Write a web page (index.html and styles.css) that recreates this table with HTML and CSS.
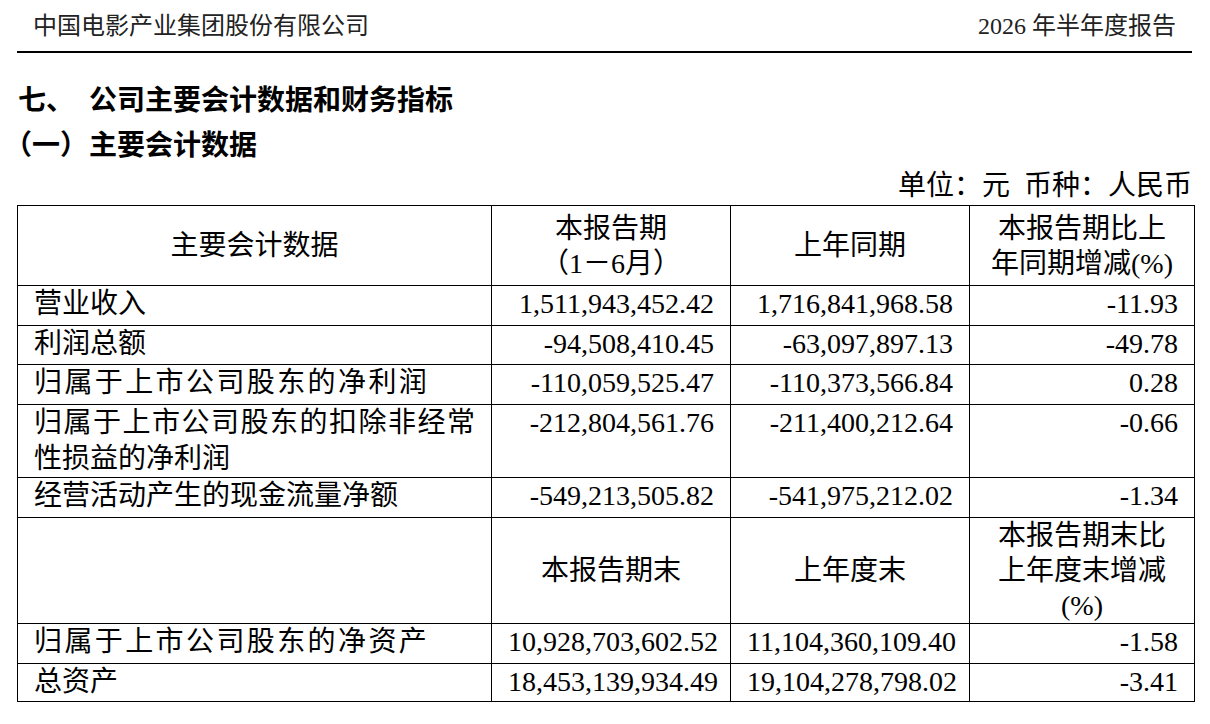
FILE: index.html
```html
<!DOCTYPE html>
<html lang="zh-CN">
<head>
<meta charset="utf-8">
<title>2026 年半年度报告</title>
<link rel="stylesheet" href="styles.css">
</head>
<body>
<div class="page">
  <header class="top">
    <span class="company">中国电影产业集团股份有限公司</span>
    <span class="report">2026 年半年度报告</span>
  </header>

  <h1 class="heading"><span class="label">七、</span><span>公司主要会计数据和财务指标</span></h1>
  <h2 class="heading"><span class="label paren">（一）</span><span>主要会计数据</span></h2>

  <div class="unit">单位：元&nbsp;&nbsp;币种：人民币</div>

  <table class="data">
    <colgroup>
      <col class="c1"><col class="c2"><col class="c3"><col class="c4">
    </colgroup>
    <tbody>
      <tr class="h-head">
        <th>主要会计数据</th>
        <th>本报告期<br>（1－6月）</th>
        <th>上年同期</th>
        <th>本报告期比上<br>年同期增减(%)</th>
      </tr>
      <tr class="h-40">
        <td class="name">营业收入</td>
        <td class="num">1,511,943,452.42</td>
        <td class="num">1,716,841,968.58</td>
        <td class="num">-11.93</td>
      </tr>
      <tr class="h-39">
        <td class="name">利润总额</td>
        <td class="num">-94,508,410.45</td>
        <td class="num">-63,097,897.13</td>
        <td class="num">-49.78</td>
      </tr>
      <tr class="h-40">
        <td class="name wide">归属于上市公司股东的净利润</td>
        <td class="num">-110,059,525.47</td>
        <td class="num">-110,373,566.84</td>
        <td class="num">0.28</td>
      </tr>
      <tr class="h-73">
        <td class="name justify">归属于上市公司股东的扣除非经常性损益的净利润</td>
        <td class="num">-212,804,561.76</td>
        <td class="num">-211,400,212.64</td>
        <td class="num">-0.66</td>
      </tr>
      <tr class="h-40">
        <td class="name">经营活动产生的现金流量净额</td>
        <td class="num">-549,213,505.82</td>
        <td class="num">-541,975,212.02</td>
        <td class="num">-1.34</td>
      </tr>
      <tr class="h-106">
        <th></th>
        <th>本报告期末</th>
        <th>上年度末</th>
        <th>本报告期末比<br>上年度末增减<br>(%)</th>
      </tr>
      <tr class="h-40">
        <td class="name wide">归属于上市公司股东的净资产</td>
        <td class="num">10,928,703,602.52</td>
        <td class="num">11,104,360,109.40</td>
        <td class="num">-1.58</td>
      </tr>
      <tr class="h-38">
        <td class="name">总资产</td>
        <td class="num">18,453,139,934.49</td>
        <td class="num">19,104,278,798.02</td>
        <td class="num">-3.41</td>
      </tr>
    </tbody>
  </table>
</div>
</body>
</html>
```

FILE: styles.css
```css
html, body {
  margin: 0;
  padding: 0;
  background: #fff;
}

body {
  font-family: "Liberation Serif", "Noto Sans CJK SC", serif;
  color: #000;
}

.page {
  width: 1177px;
  padding-left: 17px;
}

.top {
  display: flex;
  justify-content: space-between;
  align-items: center;
  height: 51px;
  padding: 0 16px;
  margin-right: 2px;
  border-bottom: 2px solid #000;
  font-size: 24px;
  line-height: 30px;
  color: #222;
}

.heading {
  display: flex;
  margin: 0;
  padding-left: 1px;
  font-family: "Noto Sans CJK SC", sans-serif;
  font-size: 28px;
  font-weight: 700;
  line-height: 45px;
  color: #000;
}

h1.heading {
  margin-top: 23px;
}

.heading .label {
  width: 71px;
  flex: none;
}

.heading .paren {
  font-feature-settings: "halt" 1;
}

.unit {
  font-size: 28px;
  line-height: 39px;
  text-align: right;
  padding-right: 2px;
}

.data {
  width: 1177px;
  table-layout: fixed;
  border-collapse: collapse;
  font-size: 28px;
}

.data col.c1 { width: 474px; }
.data col.c2 { width: 239px; }
.data col.c3 { width: 239px; }
.data col.c4 { width: 225px; }

.data th,
.data td {
  border: 1px solid #000;
  padding: 0 16px;
}

.data th {
  font-weight: 400;
  text-align: center;
  vertical-align: middle;
  line-height: 35px;
  padding: 0 8px;
}

.data td {
  vertical-align: top;
  line-height: 36px;
}

.data td.num {
  text-align: right;
  white-space: nowrap;
}

.data td.name {
  text-align: left;
}

.data td.wide {
  letter-spacing: 2.4px;
  white-space: nowrap;
}

.data td.justify {
  text-align: justify;
  text-justify: inter-character;
}

.h-head { height: 80px; }
.h-40 { height: 40px; }
.h-39 { height: 39px; }
.h-38 { height: 38px; }
.h-73 { height: 73px; }
.h-106 { height: 106px; }
```
